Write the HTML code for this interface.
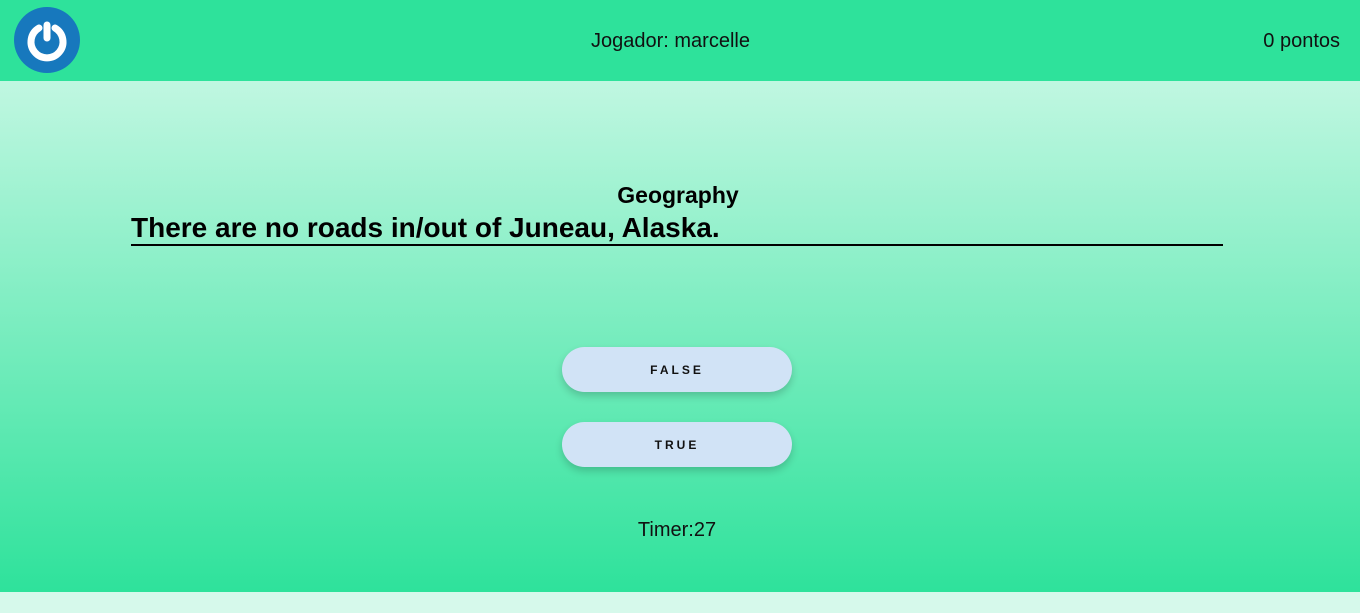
<!DOCTYPE html>
<html><head><meta charset="utf-8"><style>
body{margin:0;width:1360px;height:613px;overflow:hidden;font-family:"Liberation Sans",Roboto,sans-serif;background:#d6f9eb;position:relative}
.hdr{position:absolute;left:0;top:0;width:1360px;height:81px;background:#2ee29b}
.hdr .p{position:absolute;top:30px;font-size:20px;color:#111}
.main{position:absolute;left:0;top:81px;width:1360px;height:511px;background:linear-gradient(#c0f7e1,#2ee29b)}
.cat{position:absolute;top:182px;left:0;width:1356px;text-align:center;font-size:23px;font-weight:bold;color:#000}
.q{position:absolute;left:131px;top:212px;width:1092px;height:32px;border-bottom:2px solid #000;font-size:28px;font-weight:bold;color:#000}
.btn{position:absolute;left:562px;width:230px;height:45px;border-radius:23px;background:#d1e3f6;box-shadow:0 4px 8px rgba(0,0,0,.18);text-align:center;line-height:46px;font-size:12px;font-weight:bold;letter-spacing:3px;color:#111}
.t{position:absolute;top:519px;left:0;width:1354px;text-align:center;font-size:20px;color:#111}
</style></head><body>
<div class="hdr">
<svg style="position:absolute;left:14px;top:7px" width="66" height="66" viewBox="0 0 66 66">
<circle cx="33" cy="33" r="33" fill="#1778bd"/>
<path d="M25 21 A16 16 0 1 0 41 21" fill="none" stroke="#fff" stroke-width="7" stroke-linecap="round"/>
<line x1="33" y1="18" x2="33" y2="31" stroke="#fff" stroke-width="7" stroke-linecap="round"/>
</svg>
<div class="p" style="left:591px">Jogador: marcelle</div>
<div class="p" style="right:20px">0 pontos</div>
</div>
<div class="main"></div>
<div class="cat">Geography</div>
<div class="q">There are no roads in/out of Juneau, Alaska.</div>
<div class="btn" style="top:347px">FALSE</div>
<div class="btn" style="top:422px">TRUE</div>
<div class="t">Timer:27</div>
</body></html>
